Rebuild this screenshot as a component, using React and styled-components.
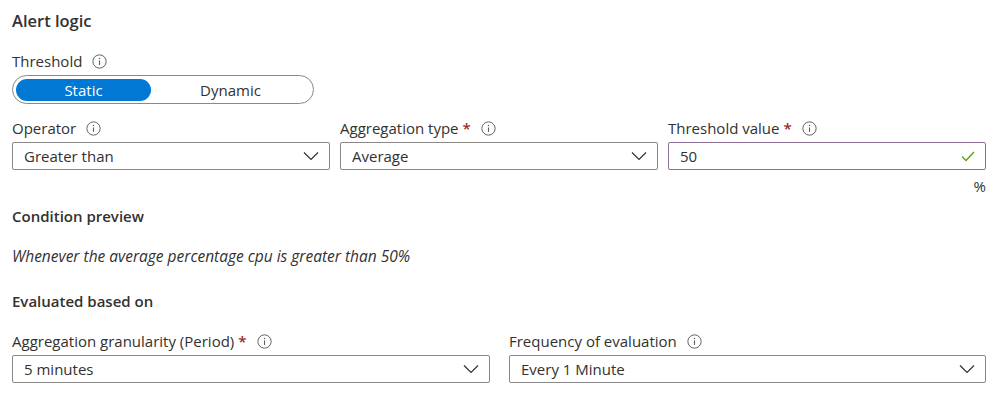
import React from "react";
import styled, { createGlobalStyle } from "styled-components";

const Global = createGlobalStyle`
  body {
    margin: 0;
    background: #fff;
    font-family: "Open Sans", "Noto Sans", sans-serif;
    color: #323130;
  }
`;

const Page = styled.div`
  width: 999px;
  height: 413px;
  padding: 0 13px 0 12px;
  box-sizing: border-box;
  overflow: hidden;
`;

const Title = styled.h2`
  margin: 0;
  padding-top: 9px;
  font-size: 16.5px;
  font-weight: 600;
  line-height: 24px;
`;

const Section = styled.div`
  margin-top: ${(p) => p.top || 0}px;
`;

const SubTitle = styled.h3`
  margin: 0;
  font-size: 15px;
  font-weight: 600;
  line-height: 20px;
`;

const Label = styled.div`
  display: flex;
  align-items: center;
  font-size: 15px;
  line-height: 20px;
  height: 20px;
  margin-bottom: 4px;
`;

const Star = styled.span`
  color: #a4262c;
  margin-left: 4px;
  font-weight: 600;
`;

const Info = styled.span`
  display: inline-flex;
  margin-left: 10px;
  color: #605e5c;
`;

const Toggle = styled.div`
  width: 302px;
  height: 29px;
  box-sizing: border-box;
  border: 1px solid #8a8886;
  border-radius: 15px;
  display: flex;
  align-items: center;
  padding: 0 3px;
`;

const ToggleOption = styled.div`
  flex: ${(p) => (p.active ? "0 0 135px" : "1")};
  height: 22px;
  border-radius: 11px;
  background: ${(p) => (p.active ? "#0078d4" : "transparent")};
  color: ${(p) => (p.active ? "#fff" : "#323130")};
  font-size: 15px;
  display: flex;
  align-items: center;
  justify-content: center;
`;

const Row = styled.div`
  display: grid;
  grid-template-columns: ${(p) => p.cols};
  column-gap: ${(p) => p.gap}px;
`;

const Field = styled.div`
  display: flex;
  flex-direction: column;
`;

const Box = styled.div`
  height: 28px;
  box-sizing: border-box;
  border: 1px solid ${(p) => (p.valid ? "#8d6e97" : "#8a8886")};
  border-radius: 2px;
  display: flex;
  align-items: center;
  justify-content: space-between;
  padding: 0 10px 0 11px;
  font-size: 15px;
`;

const Unit = styled.div`
  text-align: right;
  font-size: 15px;
  line-height: 18px;
  margin-top: 7px;
`;

const Preview = styled.p`
  margin: 0;
  font-style: italic;
  font-size: 15.5px;
  line-height: 20px;
`;

const InfoIcon = () => (
  <Info>
    <svg width="15" height="15" viewBox="0 0 14 14" fill="none">
      <circle cx="7" cy="7" r="6.2" stroke="currentColor" strokeWidth="0.9" />
      <rect x="6.5" y="6" width="1" height="4.2" fill="currentColor" />
      <circle cx="7" cy="4.2" r="0.7" fill="currentColor" />
    </svg>
  </Info>
);

const Chevron = () => (
  <svg width="16" height="10" viewBox="0 0 16 10" fill="none">
    <path d="M1 1.5 L8 8.5 L15 1.5" stroke="#323130" strokeWidth="1.2" />
  </svg>
);

const Check = () => (
  <svg width="14" height="11" viewBox="0 0 14 11" fill="none">
    <path d="M1 5.5 L5 9.5 L13 1" stroke="#57a300" strokeWidth="1.3" />
  </svg>
);

function Dropdown({ label, required, value }) {
  return (
    <Field>
      <Label>
        {label}
        {required && <Star>*</Star>}
        <InfoIcon />
      </Label>
      <Box>
        <span>{value}</span>
        <Chevron />
      </Box>
    </Field>
  );
}

export default function App() {
  return (
    <Page>
      <Global />
      <Title>Alert logic</Title>

      <Section top={18}>
        <Label>
          Threshold
          <InfoIcon />
        </Label>
        <Toggle>
          <ToggleOption active>Static</ToggleOption>
          <ToggleOption>Dynamic</ToggleOption>
        </Toggle>
      </Section>

      <Section top={14}>
        <Row cols="318px 318px 318px" gap={10}>
          <Dropdown label="Operator" value="Greater than" />
          <Dropdown label="Aggregation type" required value="Average" />
          <Field>
            <Label>
              Threshold value
              <Star>*</Star>
              <InfoIcon />
            </Label>
            <Box valid>
              <span>50</span>
              <Check />
            </Box>
            <Unit>%</Unit>
          </Field>
        </Row>
      </Section>

      <Section top={11}>
        <SubTitle>Condition preview</SubTitle>
      </Section>

      <Section top={20}>
        <Preview>Whenever the average percentage cpu is greater than 50%</Preview>
      </Section>

      <Section top={25}>
        <SubTitle>Evaluated based on</SubTitle>
      </Section>

      <Section top={20}>
        <Row cols="478px 477px" gap={19}>
          <Dropdown
            label="Aggregation granularity (Period)"
            required
            value="5 minutes"
          />
          <Dropdown label="Frequency of evaluation" value="Every 1 Minute" />
        </Row>
      </Section>
    </Page>
  );
}
